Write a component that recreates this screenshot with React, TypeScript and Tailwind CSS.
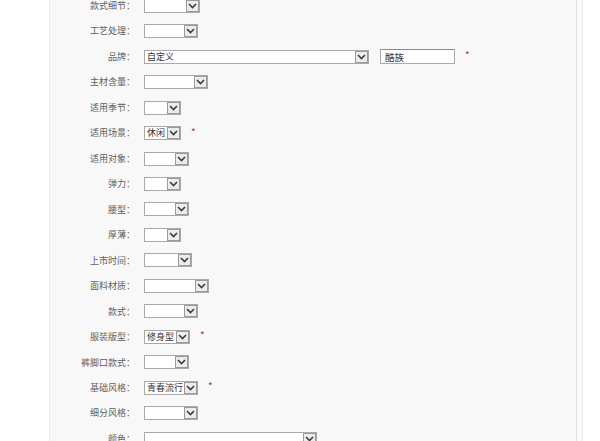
// 商品属性表单 — 旧式淘宝发布页风格

const FONT = { fontFamily: '"Noto Sans CJK SC", "Liberation Sans", sans-serif' }

type Row = {
  label: string
  width: string
  value?: string
  required?: boolean
  extra?: string
}

const ROWS: Row[] = [
  { label: '款式细节：', width: 'w-[56px]' },
  { label: '工艺处理：', width: 'w-[54px]' },
  { label: '品牌：', width: 'w-[225px]', value: '自定义', required: true, extra: '酷族' },
  { label: '主材含量：', width: 'w-[64px]' },
  { label: '适用季节：', width: 'w-[37px]' },
  { label: '适用场景：', width: 'w-[37px]', value: '休闲', required: true },
  { label: '适用对象：', width: 'w-[45px]' },
  { label: '弹力：', width: 'w-[37px]' },
  { label: '腰型：', width: 'w-[45px]' },
  { label: '厚薄：', width: 'w-[37px]' },
  { label: '上市时间：', width: 'w-[48px]' },
  { label: '面料材质：', width: 'w-[65px]' },
  { label: '款式：', width: 'w-[54px]' },
  { label: '服装版型：', width: 'w-[46px]', value: '修身型', required: true },
  { label: '裤脚口款式：', width: 'w-[45px]' },
  { label: '基础风格：', width: 'w-[54px]', value: '青春流行', required: true },
  { label: '细分风格：', width: 'w-[54px]' },
  { label: '颜色：', width: 'w-[173px]' },
]

function Chevron() {
  return (
    <svg width="9" height="6" viewBox="0 0 9 6" fill="none">
      <path d="M1 1 L4.5 4.5 L8 1" stroke="#3c3c3c" strokeWidth="1.6" />
    </svg>
  )
}

// 下拉框（XP 样式）
function Select({ width, value }: { width: string; value?: string }) {
  return (
    <div className={`flex h-[14px] items-center border border-[#a9a9a9] bg-white ${width}`}>
      <span className="flex-1 overflow-hidden whitespace-nowrap pl-[2px] text-[9px] leading-[12px] text-[#333]">
        {value}
      </span>
      <div className="flex h-[12px] w-[13px] shrink-0 items-center justify-center border border-[#9a9a9a] bg-[#ececec]">
        <Chevron />
      </div>
    </div>
  )
}

export default function App() {
  return (
    <div className="flex h-[441px] w-[600px] overflow-hidden bg-white" style={FONT}>
      <div className="w-[50px] shrink-0 border-r border-[#ececec]" />
      <div className="w-[527px] shrink-0 border-r border-[#e2e2e2] bg-[#f8f8f8]">
        <div className="-mt-[7px]">
          {ROWS.map(r => (
            <div key={r.label} className="flex h-[25.47px] items-center">
              <div className="w-[85px] shrink-0 whitespace-nowrap text-right text-[9px] text-[#5f5f5f]">
                {r.label}
              </div>
              <div className="ml-[9px] flex items-center">
                <Select width={r.width} value={r.value} />
                {r.extra && (
                  <div className="ml-[11px] flex h-[15px] w-[75px] items-center border border-[#a9a9a9] border-t-[#8a8a8a] bg-white pl-[4px] text-[9.5px] text-[#333]">
                    {r.extra}
                  </div>
                )}
                {r.required && (
                  <span className="ml-[10px] -mt-[3px] text-[10px] leading-none text-[#a83a3a]">*</span>
                )}
              </div>
            </div>
          ))}
        </div>
      </div>
      <div className="w-[5px] shrink-0 bg-[#fbfbfb]" />
      <div className="w-[1px] shrink-0 bg-[#e6e6e6]" />
      <div className="flex-1 bg-white" />
    </div>
  )
}
